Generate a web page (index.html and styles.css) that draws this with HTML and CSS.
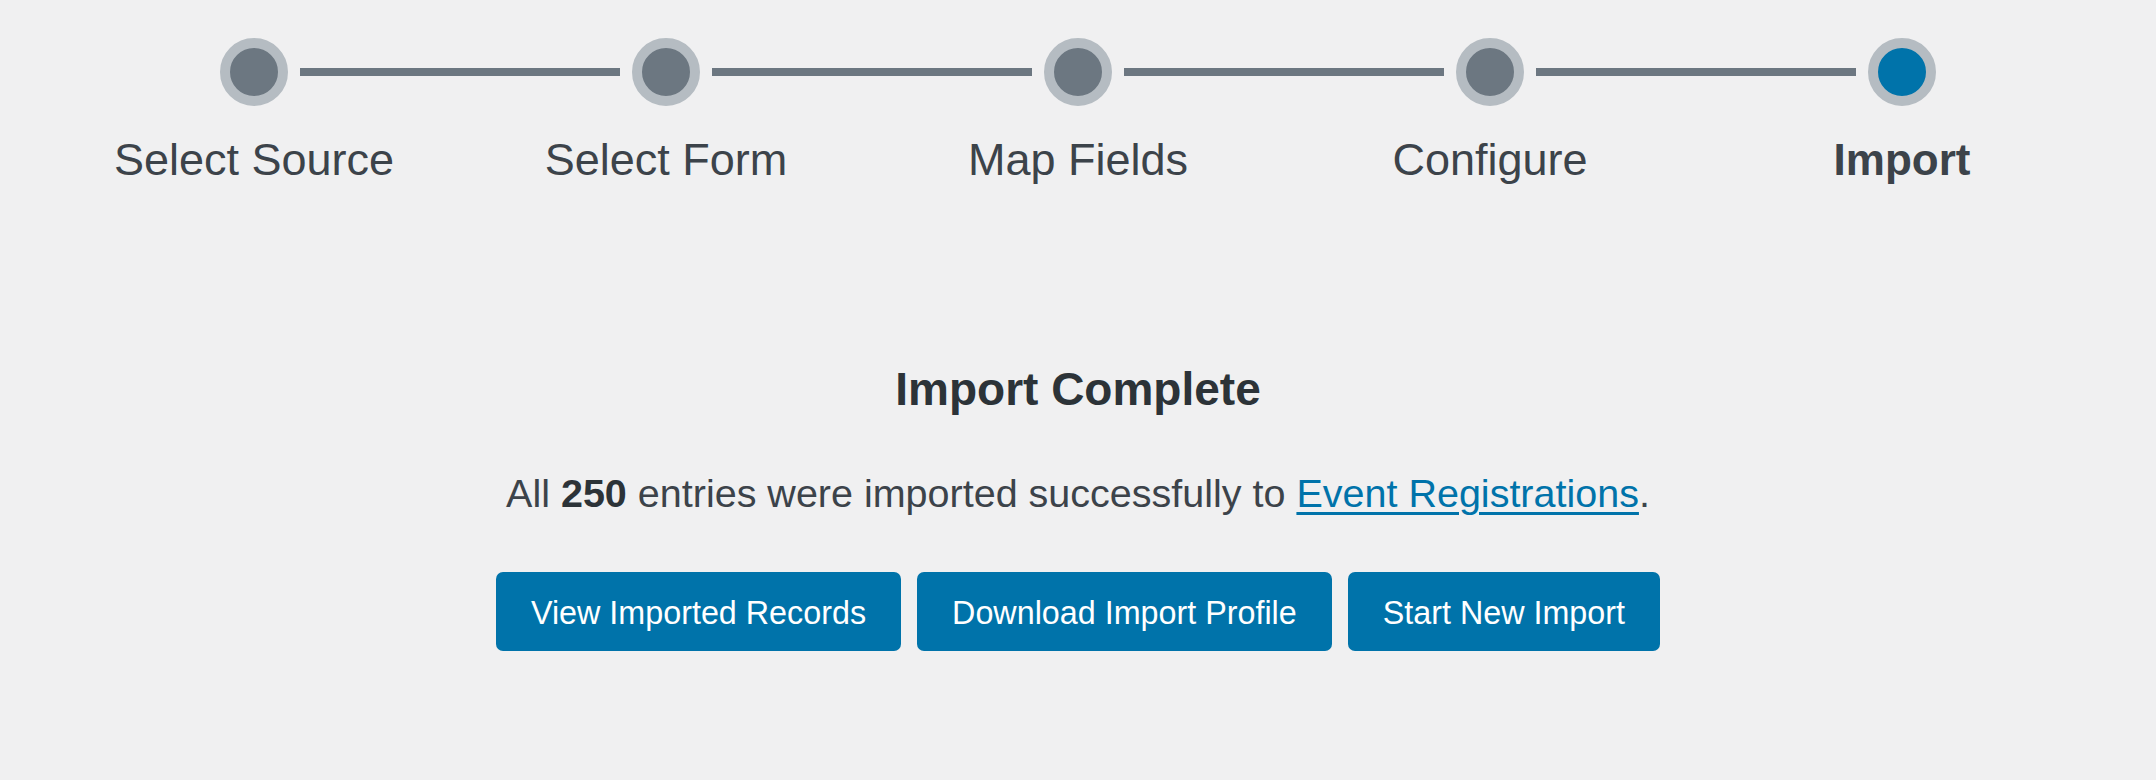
FILE: index.html
```html
<!DOCTYPE html>
<html lang="en">
<head>
    <meta charset="UTF-8">
    <meta name="viewport" content="width=device-width, initial-scale=1.0">
    <title>Import Complete</title>
    <link rel="stylesheet" href="styles.css">
</head>
<body>
    <div class="wizard">
        <!-- Pasos del asistente -->
        <div class="track">
            <span class="dot"></span>
            <span class="bar"></span>
            <span class="dot"></span>
            <span class="bar"></span>
            <span class="dot"></span>
            <span class="bar"></span>
            <span class="dot"></span>
            <span class="bar"></span>
            <span class="dot dot-active"></span>
        </div>
        <ul class="labels">
            <li>Select Source</li>
            <li>Select Form</li>
            <li>Map Fields</li>
            <li>Configure</li>
            <li class="current">Import</li>
        </ul>

        <div class="done">
            <h2>Import Complete</h2>
            <p>All <strong>250</strong> entries were imported successfully to <a href="#">Event Registrations</a>.</p>
            <div class="acciones">
                <button class="boton">View Imported Records</button>
                <button class="boton">Download Import Profile</button>
                <button class="boton">Start New Import</button>
            </div>
        </div>
    </div>
</body>
</html>
```

FILE: styles.css
```css
/* Estilos generales */
body {
    font-family: "Liberation Sans", Arial, sans-serif;
    background-color: #f0f0f1;
    color: #3c434a;
    margin: 0;
    padding: 0;
}

.wizard {
    padding-top: 38px;
}

/* Circulos y lineas */
.track {
    display: flex;
    justify-content: center;
    align-items: center;
    gap: 12px;
}

.dot {
    width: 48px;
    height: 48px;
    border: 10px solid #b5bcc2;
    border-radius: 50%;
    background-color: #6c7781;
}

.dot-active {
    background-color: #0073aa;
}

.bar {
    width: 320px;
    height: 8px;
    background-color: #6c7781;
}

.labels {
    list-style-type: none;
    margin: 28px 0 0;
    padding: 0;
    display: grid;
    grid-template-columns: repeat(5, 412px);
    justify-content: center;
}

.labels li {
    text-align: center;
    font-size: 45px;
    line-height: 52px;
}

.labels li.current {
    font-weight: bold;
    font-size: 44px;
}

/* Resultado */
.done {
    text-align: center;
    margin-top: 176px;
}

.done h2 {
    margin: 0;
    font-size: 46px;
    line-height: 54px;
    color: #2c3338;
}

.done p {
    margin: 54px 0 0;
    font-size: 39.5px;
    line-height: 46px;
}

.done p strong {
    color: #2c3338;
}

.done a {
    color: #0073aa;
    text-decoration-thickness: 3px;
    text-underline-offset: 5px;
}

.acciones {
    margin-top: 56px;
    display: flex;
    justify-content: center;
    gap: 16px;
}

button.boton {
    height: 79px;
    padding: 4px 35px 0;
    font-family: inherit;
    font-size: 32.3px;
    background-color: #0073aa;
    color: white;
    border: none;
    border-radius: 7px;
    cursor: pointer;
}
```
